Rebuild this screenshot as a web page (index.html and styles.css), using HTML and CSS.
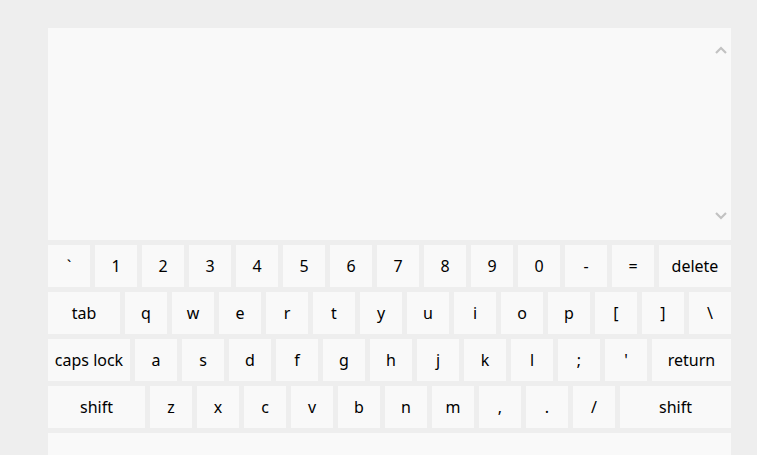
FILE: index.html
```html
<!DOCTYPE html>
<html>
<head>
<meta charset="utf-8">
<link rel="stylesheet" href="styles.css">
</head>
<body>
<div class="board">
  <div class="textarea">
    <div class="text"></div>
    <div class="scroll">
      <svg class="arrow" width="12" height="8" viewBox="0 0 12 8"><path d="M1 7 L6 2 L11 7" fill="none" stroke="#c2c2c2" stroke-width="2.2"/></svg>
      <svg class="arrow" width="12" height="8" viewBox="0 0 12 8"><path d="M1 1 L6 6 L11 1" fill="none" stroke="#c2c2c2" stroke-width="2.2"/></svg>
    </div>
  </div>
  <div class="row">
    <div class="key">`</div><div class="key">1</div><div class="key">2</div><div class="key">3</div><div class="key">4</div><div class="key">5</div><div class="key">6</div><div class="key">7</div><div class="key">8</div><div class="key">9</div><div class="key">0</div><div class="key">-</div><div class="key">=</div><div class="key grow">delete</div>
  </div>
  <div class="row">
    <div class="key w72">tab</div><div class="key">q</div><div class="key">w</div><div class="key">e</div><div class="key">r</div><div class="key">t</div><div class="key">y</div><div class="key">u</div><div class="key">i</div><div class="key">o</div><div class="key">p</div><div class="key">[</div><div class="key">]</div><div class="key">\</div>
  </div>
  <div class="row">
    <div class="key w82">caps lock</div><div class="key">a</div><div class="key">s</div><div class="key">d</div><div class="key">f</div><div class="key">g</div><div class="key">h</div><div class="key">j</div><div class="key">k</div><div class="key">l</div><div class="key">;</div><div class="key">'</div><div class="key grow">return</div>
  </div>
  <div class="row">
    <div class="key w97">shift</div><div class="key">z</div><div class="key">x</div><div class="key">c</div><div class="key">v</div><div class="key">b</div><div class="key">n</div><div class="key">m</div><div class="key">,</div><div class="key">.</div><div class="key">/</div><div class="key grow">shift</div>
  </div>
  <div class="row">
    <div class="key grow"></div>
  </div>
</div>
</body>
</html>
```
FILE: styles.css
```css
html, body {
  margin: 0;
  padding: 0;
  background: #eeeeee;
}
body {
  padding: 28px 0 0 48px;
  font-family: "Noto Sans", "Liberation Sans", sans-serif;
  font-size: 16px;
  color: #000;
}
.board {
  width: 683px;
  display: flex;
  flex-direction: column;
  gap: 5px;
}
.textarea {
  height: 212px;
  background: #f9f9f9;
  display: flex;
}
.text {
  flex: 1;
}
.scroll {
  width: 17px;
  display: flex;
  flex-direction: column;
  justify-content: space-between;
  align-items: flex-start;
  padding: 18px 0 20px 0;
  box-sizing: border-box;
}
.arrow {
  display: block;
  margin-left: 1px;
}
.row {
  display: flex;
  gap: 5px;
}
.key {
  width: 42px;
  height: 42px;
  flex: none;
  background: #f9f9f9;
  display: flex;
  align-items: center;
  justify-content: center;
  white-space: nowrap;
}
.key.grow {
  flex: 1;
  width: auto;
}
.w72 { width: 72px; }
.w82 { width: 82px; }
.w97 { width: 97px; }
```
